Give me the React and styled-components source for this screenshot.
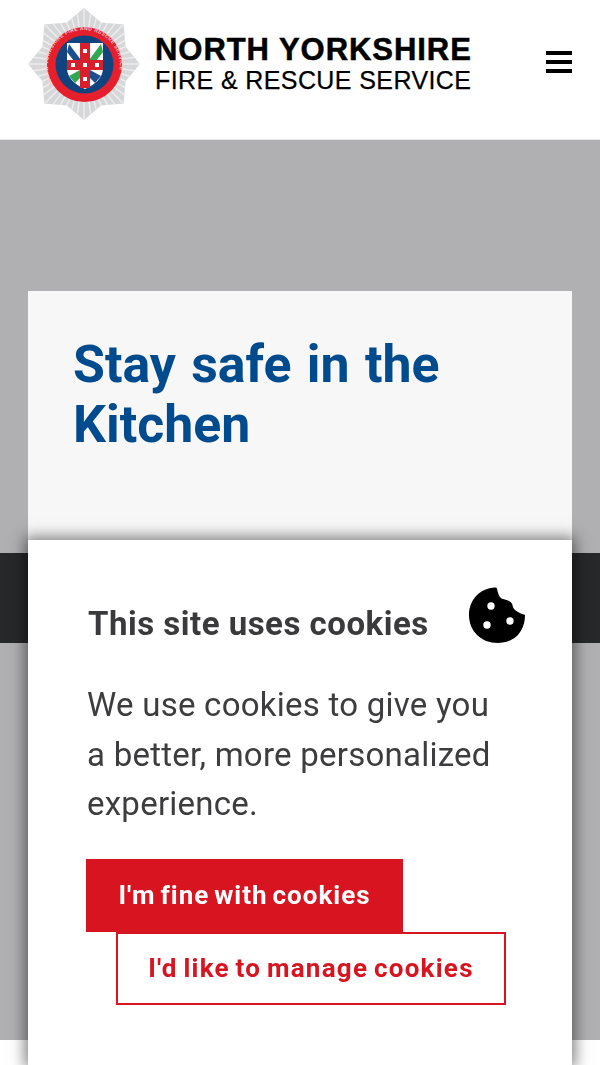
import * as React from 'react'
import styled, { createGlobalStyle } from 'styled-components'

const RED = '#d7141f'
const BLUE = '#004b8d'

const GlobalStyle = createGlobalStyle`
    html, body {
        margin: 0;
        padding: 0;
        background: #fff;
        font-family: Roboto, "Liberation Sans", sans-serif;
    }
    body {
        height: 1065px;
        overflow: hidden;
    }
`

const Page = styled.div`
    width: 600px;
    height: 1065px;
    overflow: hidden;
    background: #fff;
`

const Header = styled.header`
    height: 140px;
    box-sizing: border-box;
    padding: 8px 28px 0 28px;
    display: flex;
    align-items: flex-start;
    background: #fff;
    border-bottom: 1px solid #e6e6e6;
`

const Logo = styled.div`
    display: flex;
    align-items: flex-start;
    gap: 15px;
`

const Wordmark = styled.div`
    display: flex;
    flex-direction: column;
    padding-top: 25px;
    font-family: "Liberation Sans", Arial, sans-serif;
    color: #000;
    white-space: nowrap;
`

const WordmarkTop = styled.span`
    font-size: 31px;
    line-height: 34px;
    font-weight: 700;
    letter-spacing: 0.95px;
    -webkit-text-stroke: 0.5px #000;
`

const WordmarkBottom = styled.span`
    font-size: 25px;
    line-height: 27px;
    letter-spacing: 0.4px;
    -webkit-text-stroke: 0.25px #000;
`

const MenuButton = styled.div`
    margin-left: auto;
    margin-top: 43px;
    width: 26px;
    display: flex;
    flex-direction: column;
    gap: 5px;
`

const MenuBar = styled.span`
    display: block;
    height: 4px;
    background: #000;
`

const Hero = styled.section`
    height: 413px;
    box-sizing: border-box;
    padding: 151px 28px 0;
    background: #b0b0b2;
    overflow: hidden;
`

const HeroCard = styled.div`
    height: 300px;
    box-sizing: border-box;
    padding: 44px 45px 0;
    background: #f7f7f8;
`

const HeroTitle = styled.h1`
    margin: 0;
    font-family: Roboto, sans-serif;
    font-size: 51.8px;
    line-height: 60px;
    font-weight: 700;
    word-spacing: 2.5px;
    color: ${BLUE};
`

const DarkBand = styled.div`
    height: 90px;
    background: #27282a;
`

const GreyArea = styled.div`
    height: 397px;
    background: #b0b0b2;
`

const Popup = styled.div`
    position: fixed;
    left: 28px;
    top: 540px;
    width: 544px;
    height: 525px;
    box-sizing: border-box;
    padding: 62px 58px 0;
    background: #fff;
    box-shadow: 0 0 14px 3px rgba(0, 0, 0, 0.5);
`

const PopupHead = styled.div`
    position: relative;
`

const PopupTitle = styled.h2`
    margin: 0 0 0 2px;
    font-family: Roboto, sans-serif;
    font-size: 33px;
    line-height: 44px;
    font-weight: 700;
    letter-spacing: 0.5px;
    color: #3a3a3c;
`

const CookieIcon = styled.svg`
    position: absolute;
    right: -11px;
    top: -15px;
    width: 56px;
    height: 56px;
`

const PopupText = styled.p`
    margin: 34px 0 0 1px;
    width: 410px;
    font-size: 33px;
    line-height: 49.5px;
    font-weight: 400;
    letter-spacing: 0.25px;
    color: #3d3d3f;
`

const Actions = styled.div`
    display: flex;
    flex-direction: column;
    align-items: flex-start;
    margin-top: 30px;
`

const Button = styled.div`
    box-sizing: border-box;
    height: 73px;
    width: ${(p) => (p.$outline ? '390px' : '317px')};
    margin-left: ${(p) => (p.$outline ? '30px' : '0')};
    display: flex;
    align-items: center;
    justify-content: center;
    font-size: 26px;
    font-weight: 700;
    letter-spacing: ${(p) => (p.$outline ? '1.25px' : '1px')};
    word-spacing: ${(p) => (p.$outline ? '-2px' : '-2.5px')};
    color: ${(p) => (p.$outline ? RED : '#fff')};
    background: ${(p) => (p.$outline ? '#fff' : RED)};
    border: ${(p) => (p.$outline ? `2px solid ${RED}` : 'none')};
`

const polar = (r, a) => `${(56 + r * Math.cos(a)).toFixed(1)},${(56 + r * Math.sin(a)).toFixed(1)}`

const starPoints = () => {
    const pts = []
    for (let i = 0; i < 16; i++) {
        const a = (i * Math.PI) / 8 - Math.PI / 2
        pts.push(polar(i % 2 === 0 ? 56 : 45, a))
    }
    return pts.join(' ')
}

// thin fan of rays over the silver star
const rays = () => {
    const out = []
    for (let i = 0; i < 48; i++) {
        const a = (i * Math.PI) / 24
        out.push(`M${polar(36, a)} L${polar(56, a)}`)
    }
    return out.join(' ')
}

const Badge = () => (
    <svg width="112" height="112" viewBox="0 0 112 112">
        <defs>
            <clipPath id="star">
                <polygon points={starPoints()} />
            </clipPath>
            <path id="ring" d="M26 78 A36 36 0 1 1 86 78" />
        </defs>
        <polygon points={starPoints()} fill="#d6d7d9" />
        <path d={rays()} clipPath="url(#star)" stroke="#ececed" strokeWidth="1.5" fill="none" />
        <circle cx="56.5" cy="56.5" r="37.5" fill="#e5202c" />
        <circle cx="56.5" cy="56.5" r="29" fill="#11437f" />
        <text fontFamily="Liberation Sans, sans-serif" fontSize="5" fontWeight="700" fill="#f9c9cb" letterSpacing="0.45">
            <textPath href="#ring" startOffset="1">
                NORTH YORKSHIRE FIRE AND RESCUE SERVICE
            </textPath>
        </text>
        <path d="M39 35 H75 V60 Q75 73 57 81 Q39 73 39 60 Z" fill="#fff" />
        <path d="M41 36 L53 52 L46 53 L39 44 Z" fill="#1d4f8f" />
        <path d="M73 36 L61 52 L68 53 L75 44 Z" fill="#2fa84f" />
        <path d="M41 68 L52 62 L53 69 L47 75 Z" fill="#2fa84f" />
        <path d="M73 68 L62 62 L61 69 L67 75 Z" fill="#1d4f8f" />
        <rect x="52" y="35" width="10" height="45" fill="#d7202c" />
        <rect x="39" y="52" width="36" height="10" fill="#d7202c" />
        <rect x="55" y="55" width="4" height="4" fill="#fff" />
        <rect x="43" y="55" width="4" height="4" fill="#fff" />
        <rect x="67" y="55" width="4" height="4" fill="#fff" />
        <rect x="55" y="41" width="4" height="4" fill="#fff" />
        <rect x="55" y="69" width="4" height="4" fill="#fff" />
    </svg>
)

const App = () => {
    return (
        <Page>
            <GlobalStyle />
            <Header>
                <Logo>
                    <Badge />
                    <Wordmark>
                        <WordmarkTop>NORTH YORKSHIRE</WordmarkTop>
                        <WordmarkBottom>FIRE &amp; RESCUE SERVICE</WordmarkBottom>
                    </Wordmark>
                </Logo>
                <MenuButton>
                    <MenuBar />
                    <MenuBar />
                    <MenuBar />
                </MenuButton>
            </Header>
            <Hero>
                <HeroCard>
                    <HeroTitle>Stay safe in the Kitchen</HeroTitle>
                </HeroCard>
            </Hero>
            <DarkBand />
            <GreyArea />
            <Popup>
                <PopupHead>
                    <PopupTitle>This site uses cookies</PopupTitle>
                    <CookieIcon viewBox="0 0 56 56">
                        <path
                            d="M26 0.5 C27 0.5 28 1 28 1.5 C29 6 30 11 34 12 C39 13 43 15 43.5 18 C44 22 46 23 49 25 C52 27 55 27 56 28 C56 45 45 56 29 56 C12 56 0 44 0 28 C0 13 11 1 26 0.5 Z"
                            fill="#000"
                        />
                        <circle cx="22" cy="19" r="3.7" fill="#fff" />
                        <circle cx="18" cy="38" r="3.7" fill="#fff" />
                        <circle cx="41" cy="34" r="3.7" fill="#fff" />
                    </CookieIcon>
                </PopupHead>
                <PopupText>We use cookies to give you a better, more personalized experience.</PopupText>
                <Actions>
                    <Button>I'm fine with cookies</Button>
                    <Button $outline>I'd like to manage cookies</Button>
                </Actions>
            </Popup>
        </Page>
    )
}

export default App
